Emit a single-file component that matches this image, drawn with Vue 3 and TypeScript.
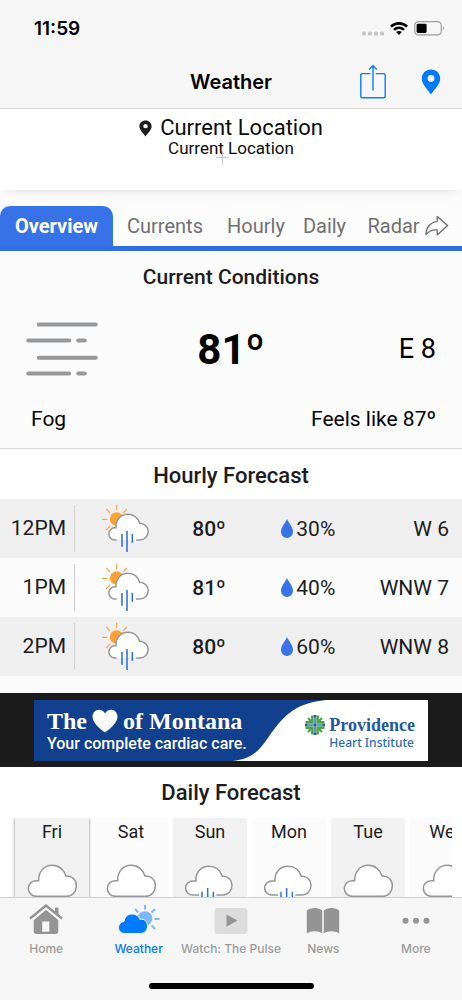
<script setup lang="ts">
import { ref } from 'vue'

interface Hour {
  time: string
  temp: string
  rain: string
  wind: string
}

interface Day {
  name: string
  rainy: boolean
}

const tabs = ['Overview', 'Currents', 'Hourly', 'Daily', 'Radar']
const activeTab = ref('Overview')

const hours: Hour[] = [
  { time: '12PM', temp: '80º', rain: '30%', wind: 'W 6' },
  { time: '1PM', temp: '81º', rain: '40%', wind: 'WNW 7' },
  { time: '2PM', temp: '80º', rain: '60%', wind: 'WNW 8' },
]

const days: Day[] = [
  { name: 'Fri', rainy: false },
  { name: 'Sat', rainy: false },
  { name: 'Sun', rainy: true },
  { name: 'Mon', rainy: true },
  { name: 'Tue', rainy: false },
  { name: 'Wed', rainy: false },
]
</script>

<template>
  <div class="screen">
    <header class="top">
      <div class="status">
        <span class="clock">11:59</span>
        <div class="indicators">
          <svg class="dots" width="22" height="5" viewBox="0 0 22 5" fill="#c4c4c4">
            <rect x="0" y="0.5" width="4" height="4" rx="1.5" />
            <rect x="6" y="0.5" width="4" height="4" rx="1.5" />
            <rect x="12" y="0.5" width="4" height="4" rx="1.5" />
            <rect x="18" y="0.5" width="4" height="4" rx="1.5" />
          </svg>
          <svg width="18" height="13" viewBox="0 0 18 13" fill="none" stroke="#000" stroke-width="2.6">
            <path d="M0.9 4.7C5.4 0.2 12.6 0.2 17.1 4.7" />
            <path d="M4 7.8C6.8 5 11.2 5 14 7.8" />
            <path d="M9 13L6.1 10.1C7.7 8.6 10.3 8.6 11.9 10.1Z" fill="#000" stroke="none" />
          </svg>
          <svg width="31" height="15" viewBox="0 0 31 15">
            <rect x="0.7" y="0.7" width="26.6" height="13.2" rx="3.6" fill="none" stroke="#9c9c9c" stroke-width="1.2" />
            <rect x="2.6" y="2.7" width="10" height="9.2" rx="1.4" fill="#000" />
            <path d="M28.9 5.2C30.3 5.9 30.3 8.7 28.9 9.4Z" fill="#9c9c9c" />
          </svg>
        </div>
      </div>
      <div class="navbar">
        <h1>Weather</h1>
        <div class="actions">
          <button type="button" aria-label="Share">
            <svg width="26" height="36" viewBox="0 0 26 36" fill="none" stroke="#0a7cff" stroke-width="1.4">
              <path d="M10.3 9.6H2.6Q0.8 9.6 0.8 11.4V32Q0.8 33.8 2.6 33.8H23.4Q25.2 33.8 25.2 32V11.4Q25.2 9.6 23.4 9.6H15.7" />
              <path d="M13 26.5V1.6M9.2 5.4L13 1.4L16.8 5.4" />
            </svg>
          </button>
          <button type="button" aria-label="Locate">
            <svg width="20" height="26" viewBox="0 0 20 26">
              <path fill="#007aff" fill-rule="evenodd" d="M10 0.5C4.6 0.5 0.8 4.4 0.8 9.6C0.8 15.6 6.6 20.4 10 25.4C13.4 20.4 19.2 15.6 19.2 9.6C19.2 4.4 15.4 0.5 10 0.5ZM10 6A3.4 3.4 0 1 1 10 12.8A3.4 3.4 0 1 1 10 6Z" />
            </svg>
          </button>
        </div>
      </div>
    </header>

    <main class="content">
      <section class="location">
        <p class="place">
          <svg width="13" height="17" viewBox="0 0 20 26">
            <path fill="#1d1d1f" fill-rule="evenodd" d="M10 0.5C4.6 0.5 0.6 4.4 0.6 9.6C0.6 15.6 6.6 20.4 10 25.4C13.4 20.4 19.4 15.6 19.4 9.6C19.4 4.4 15.4 0.5 10 0.5ZM10 6A3.4 3.4 0 1 1 10 12.8A3.4 3.4 0 1 1 10 6Z" />
          </svg>
          Current Location
        </p>
        <p class="sub">Current Location</p>
        <svg class="cross" width="13" height="13" viewBox="0 0 13 13" stroke="#c9c9c9" stroke-width="1">
          <path d="M0 6.5H13M6.5 0V13" />
        </svg>
      </section>

      <nav class="tabs" role="tablist" aria-label="Forecast views">
        <button
          v-for="tab in tabs"
          :key="tab"
          type="button"
          role="tab"
          class="tab"
          :class="{ active: tab === activeTab }"
          :aria-selected="tab === activeTab"
          @click="activeTab = tab"
        >
          {{ tab }}
          <svg v-if="tab === 'Radar'" width="24" height="20" viewBox="0 1.5 24 20" fill="none" stroke="#707074" stroke-width="1.3" stroke-linejoin="round">
            <path d="M12.2 1.9L22.6 11L12.2 20.4V15.4C7.4 15 4 16.500 1 20C1 12.800 5.600 7.400 12.200 7.100Z" />
          </svg>
        </button>
      </nav>

      <section class="current">
        <h2>Current Conditions</h2>
        <div class="reading">
          <svg width="72" height="54" viewBox="0 0 72 54" stroke="#969899" stroke-width="4" stroke-linecap="round">
            <path d="M12.8 2.5H69.8M2.2 18.5H43.2M52.2 18.5H58.8M12.8 35.8H69.8M2.2 51.5H43.2M52.2 51.5H58.8" />
          </svg>
          <strong>81º</strong>
          <span class="wind">E 8</span>
        </div>
        <div class="summary">
          <span>Fog</span>
          <span>Feels like 87º</span>
        </div>
      </section>

      <section class="hourly">
        <h2 id="hourly-title">Hourly Forecast</h2>
        <table aria-labelledby="hourly-title">
          <colgroup>
            <col class="c-time" />
            <col class="c-icon" />
            <col class="c-temp" />
            <col class="c-rain" />
            <col class="c-wind" />
          </colgroup>
          <tbody>
            <tr v-for="hour in hours" :key="hour.time">
              <th scope="row"><div class="time">{{ hour.time }}</div></th>
              <td class="icon">
                <svg width="49" height="49" viewBox="300 147 147 147" fill="none" role="img" aria-label="Sun and rain">
                  <g stroke="#f9a84a" stroke-width="3.4">
                    <path d="M347 149V166M316 162L327 174M378 162L366 174M303 193H319M315 225L328 212" />
                  </g>
                  <circle cx="347" cy="192" r="20.5" fill="#fca235" />
                  <path d="M347 255H339A18 18 0 0 1 345 218.500C343 195 359 178 380 178C398 178 411 189 416 205A25 25 0 0 1 417 255H405" fill="#fff" stroke="#98999b" stroke-width="4.500" />
                  <path d="M363 237V275M378 228V291M394 237V263" stroke="#3472e4" stroke-width="4.800" />
                </svg>
              </td>
              <td class="temp">{{ hour.temp }}</td>
              <td>
                <div class="rain">
                  <svg width="12" height="19" viewBox="0 0 12 19">
                    <path fill="#3874e8" d="M6 0C7.600 4 12 8 12 12.600C12 16.300 9.400 19 6 19C2.600 19 0 16.300 0 12.600C0 8 4.400 4 6 0Z" />
                  </svg>
                  {{ hour.rain }}
                </div>
              </td>
              <td class="gust">{{ hour.wind }}</td>
            </tr>
          </tbody>
        </table>
      </section>

      <aside class="ad">
        <a class="banner" href="#" aria-label="The heart of Montana, Providence Heart Institute">
          <svg class="wave" viewBox="0 0 393 61" preserveAspectRatio="none" aria-hidden="true">
            <path fill="#11408f" d="M0 0H291C263 3 251 13 236 34C224 52 217 59 198 61H0Z" />
          </svg>
          <div class="pitch">
            <div class="slogan">
              The
              <svg width="26" height="24" viewBox="0 0 26 24">
                <path fill="#fff" d="M13 23.500C9 20.500 0.500 14.500 0.500 7.500C0.500 3.500 3.500 0.700 7 0.700C9.700 0.700 12 2 13 4.500C14 2 16.300 0.700 19 0.700C22.500 0.700 25.500 3.500 25.500 7.500C25.500 14.500 17 20.500 13 23.500Z" />
              </svg>
              of Montana
            </div>
            <div class="tagline">Your complete cardiac care.</div>
          </div>
          <div class="sponsor">
            <svg width="20" height="20" viewBox="0 0 20 20" fill="none">
              <path d="M7.400 0.500V7.400H0.500M12.600 0.500V7.400H19.500M7.400 19.500V12.600H0.500M12.600 19.500V12.600H19.500" stroke="#4da447" stroke-width="2.600" />
              <path d="M3 3L6 6M17 3L14 6M3 17L6 14M17 17L14 14" stroke="#4da447" stroke-width="2.200" />
              <path d="M10 0.500V19.500M0.500 10H19.500" stroke="#3a75b8" stroke-width="1.600" />
              <path d="M10 0V2M10 18V20M0 10H2M18 10H20M9 10H11" stroke="#2458b0" stroke-width="2.600" />
            </svg>
            <div class="names">
              <span class="brand">Providence</span>
              <span class="unit">Heart Institute</span>
            </div>
          </div>
        </a>
      </aside>

      <section class="daily">
        <h2>Daily Forecast</h2>
        <ul class="days">
          <li v-for="(day, index) in days" :key="day.name" :class="{ selected: index === 0 }">
            <span>{{ day.name }}</span>
            <svg v-if="day.rainy" width="50" height="48" viewBox="80 283 150 144" fill="none">
              <path d="M122 376H104A22 21 0 0 1 104 334H113C111 307 130 290 151 290C170 290 186 301 192 320C210 319 221 332 221 347C221 364 209 376 195 376H174" fill="#fff" stroke="#949698" stroke-width="4.500" />
              <path d="M131 366V404M148 355V418M165 366V392" stroke="#3472e4" stroke-width="4.500" />
            </svg>
            <svg v-else width="50" height="34" viewBox="80 283 150 102" fill="none">
              <path d="M108 380A23 23 0 0 1 107 333H115C114 306 132 287 155 287C176 287 192 300 197 319C216 318 228 331 228 348C228 366 216 380 200 380Z" fill="#fff" stroke="#949698" stroke-width="4.500" />
            </svg>
          </li>
        </ul>
      </section>
    </main>

    <footer class="bottom">
      <nav class="tabbar" aria-label="Main">
        <a href="#">
          <svg width="34" height="30" viewBox="0 0 34 30">
            <path fill="#949494" d="M17 5.500L29.300 16V27Q29.300 30 26.500 30H7.500Q4.700 30 4.700 27V16Z" />
            <path fill="#f6f6f6" d="M13.200 17.500H20.300V27.700H13.200Z" />
            <path fill="none" stroke="#f6f6f6" stroke-width="2" d="M3 16L17 4.500L31 16" />
            <path fill="none" stroke="#949494" stroke-width="2.400" d="M1 14.500L17 1.500L33 14.500" />
            <path fill="#949494" d="M26 3.500H29.500V11.500L26 8.700Z" />
          </svg>
          Home
        </a>
        <a href="#" class="current-page" aria-current="page">
          <svg width="42" height="30" viewBox="0 0 42 30">
            <circle cx="27" cy="14.500" r="7.300" fill="#7db8ff" />
            <path stroke="#7db8ff" stroke-width="2" d="M27 1V5.500M17 5L20.200 8.500M37 5L33.500 8.500M36.500 15H41.500M33.500 21.500L37 25" />
            <path fill="#007aff" stroke="#f6f6f6" stroke-width="1" d="M7 29.500C3 29.500 0.500 27 0.500 23.500C0.500 20 3 17.800 6 17.500C6.500 13 9.500 10 14 10C18 10 20.500 12 21.800 15.300C26.500 14.500 29.500 17.500 29.500 22C29.500 26.500 26.500 29.500 22.500 29.500Z" />
          </svg>
          Weather
        </a>
        <a href="#">
          <svg width="34" height="30" viewBox="0 0 34 30">
            <rect x="0.500" y="4" width="33" height="26" rx="3" fill="#dcdcdc" />
            <path fill="#949494" d="M12.500 10.500L23.500 16.500L12.500 22.700Z" />
          </svg>
          Watch: The Pulse
        </a>
        <a href="#">
          <svg width="34" height="30" viewBox="0 0 34 30" fill="#949494">
            <path d="M16.200 6.500C13 3 4 3 0.800 6.500V29.500C4 26.500 13 26.500 16.200 29.500Z" />
            <path d="M17.800 6.500C21 3 30 3 33.200 6.500V29.500C30 26.500 21 26.500 17.800 29.500Z" />
          </svg>
          News
        </a>
        <a href="#">
          <svg width="28" height="30" viewBox="0 0 28 30" fill="#949494">
            <circle cx="3.500" cy="16.700" r="3" />
            <circle cx="14" cy="16.700" r="3" />
            <circle cx="24.500" cy="16.700" r="3" />
          </svg>
          More
        </a>
      </nav>
      <div class="home-bar"></div>
    </footer>
  </div>
</template>

<style>
body {
  margin: 0;
}
</style>

<style scoped>
.screen {
  display: flex;
  flex-direction: column;
  height: 100vh;
  overflow: hidden;
  background: #fbfbfb;
  color: #1c1c1e;
  font-family: Roboto, "Liberation Sans", sans-serif;
}

button {
  padding: 0;
  border: 0;
  background: none;
  font: inherit;
  cursor: pointer;
}

a {
  text-decoration: none;
}

svg {
  flex: none;
  display: block;
}

h1,
h2,
p {
  margin: 0;
}

h2 {
  font-size: 22px;
  line-height: 52px;
  font-weight: 500;
  text-align: center;
}

.top {
  flex: none;
  background: #f6f6f6;
  border-bottom: 1px solid #d8d8d8;
  font-family: Inter, "Liberation Sans", sans-serif;
  color: #000;
}

.status {
  display: flex;
  justify-content: space-between;
  align-items: center;
  height: 56px;
  padding: 0 17px 0 34px;
}

.clock {
  font-size: 19px;
  font-weight: 600;
}

.indicators {
  display: flex;
  align-items: center;
  gap: 6px;
}

.dots {
  align-self: flex-end;
}

.navbar {
  display: grid;
  grid-template-columns: 1fr auto 1fr;
  align-items: center;
  height: 52px;
  padding: 0 21px;
}

.navbar h1 {
  grid-column: 2;
  font-size: 20px;
  font-weight: 600;
}

.actions {
  display: flex;
  justify-content: flex-end;
  align-items: center;
  gap: 35px;
}

.content {
  flex: 1;
  min-height: 0;
  overflow: hidden;
}

.location {
  position: relative;
  height: 76px;
  padding-top: 5px;
  background: #fff;
  color: #0c0c0c;
  text-align: center;
  box-shadow: 0 6px 8px -4px rgba(0, 0, 0, 0.08);
}

.place {
  display: flex;
  justify-content: center;
  align-items: center;
  gap: 8px;
  font-size: 22px;
  line-height: 28px;
}

.sub {
  font-size: 17px;
  line-height: 12px;
}

.cross {
  position: absolute;
  top: 42px;
  left: calc(50% - 15px);
}

.tabs {
  display: grid;
  grid-template-columns: 113fr 104fr 78fr 59fr 108fr;
  margin-top: 16px;
  border-bottom: 5px solid #2f6de2;
}

.tab {
  display: flex;
  justify-content: center;
  align-items: center;
  gap: 5px;
  height: 40px;
  border-radius: 10px 10px 0 0;
  background: #fcfcfc;
  color: #707074;
  font-size: 20px;
}

.tab.active {
  background: #3773e6;
  color: #fff;
  font-weight: 700;
}

.current {
  border-bottom: 1px solid #dadada;
  color: #000;
}

.current h2 {
  color: #1c1c1e;
  font-size: 21px;
}

.reading {
  display: grid;
  grid-template-columns: 1fr auto 1fr;
  align-items: center;
  height: 92px;
  padding: 0 26px;
}

.reading strong {
  font-size: 42px;
  font-weight: 700;
}

.wind {
  font-size: 27px;
  text-align: right;
}

.summary {
  display: flex;
  justify-content: space-between;
  height: 53px;
  padding: 0 26px 0 31px;
  font-size: 21px;
  line-height: 48px;
}

.hourly {
  background: #fff;
}

.hourly h2 {
  line-height: 50px;
  padding-top: 2px;
  margin-bottom: -2px;
}

table {
  width: 100%;
  table-layout: fixed;
  border-collapse: collapse;
  font-size: 21px;
}

.c-time { width: 75px; }
.c-icon { width: 22%; }
.c-temp { width: 14%; }
.c-rain { width: 29%; }

tr {
  height: 59px;
  background: #efefef;
}

tr:nth-child(even) {
  background: #fbfbfb;
}

th,
td {
  padding: 0;
}

th {
  font-weight: 400;
}

.time {
  padding-right: 8px;
  border-right: 1px solid #d0d0d0;
  line-height: 47px;
  text-align: right;
}

.icon svg {
  margin: 0 auto;
}

.temp {
  font-weight: 500;
  text-align: center;
}

.rain {
  display: flex;
  justify-content: center;
  align-items: center;
  gap: 3px;
}

.gust {
  padding-right: 13px;
  text-align: right;
  white-space: nowrap;
}

.ad {
  margin-top: 17px;
  padding: 7px 34px 6px;
  background: #1b1b1b;
}

.banner {
  position: relative;
  display: flex;
  justify-content: space-between;
  align-items: center;
  height: 61px;
  background: #fff;
  color: #fff;
}

.wave {
  position: absolute;
  inset: 0;
  width: 100%;
  height: 100%;
}

.pitch {
  position: relative;
  padding-left: 13px;
}

.slogan {
  display: flex;
  align-items: center;
  gap: 5px;
  font-family: "Liberation Serif", serif;
  font-size: 24px;
  font-weight: 700;
  line-height: 26px;
}

.tagline {
  font-size: 16px;
  font-weight: 500;
  line-height: 20px;
}

.sponsor {
  position: relative;
  display: flex;
  gap: 4px;
  padding: 4px 13px 0 0;
}

.names {
  display: flex;
  flex-direction: column;
}

.brand {
  color: #1f57a0;
  font-family: "Liberation Serif", serif;
  font-size: 18px;
  font-weight: 700;
  line-height: 20px;
}

.unit {
  color: #2a6bb4;
  font-family: "Noto Sans", sans-serif;
  font-size: 12px;
  font-weight: 500;
  line-height: 16px;
}

.daily {
  background: #fff;
}

.days {
  display: flex;
  gap: 5px;
  margin: -1px 10px 0 0;
  padding: 0 0 0 15px;
  overflow: hidden;
  list-style: none;
  font-size: 18px;
}

.days li {
  flex: 0 0 74px;
  height: 120px;
  background: #fbfbfb;
  text-align: center;
  line-height: 28px;
}

.days li:nth-child(odd) {
  background: #f1f1f1;
}

.days li.selected {
  box-shadow: 0 0 3px rgba(0, 0, 0, 0.5);
}

.days svg {
  margin: 18px auto 0;
}

.bottom {
  flex: none;
  background: #f6f6f6;
  border-top: 1px solid #cfcfcf;
}

.tabbar {
  display: grid;
  grid-template-columns: repeat(5, minmax(0, 1fr));
  padding-top: 6px;
  font-family: Inter, "Liberation Sans", sans-serif;
  font-size: 12px;
  font-weight: 500;
}

.tabbar a {
  display: flex;
  flex-direction: column;
  align-items: center;
  gap: 6px;
  color: #9b9b9b;
  line-height: 17px;
  white-space: nowrap;
}

.tabbar .current-page {
  color: #007aff;
}

.home-bar {
  width: 165px;
  height: 6px;
  margin: 26px auto 11px;
  border-radius: 3px;
  background: #000;
}
</style>
